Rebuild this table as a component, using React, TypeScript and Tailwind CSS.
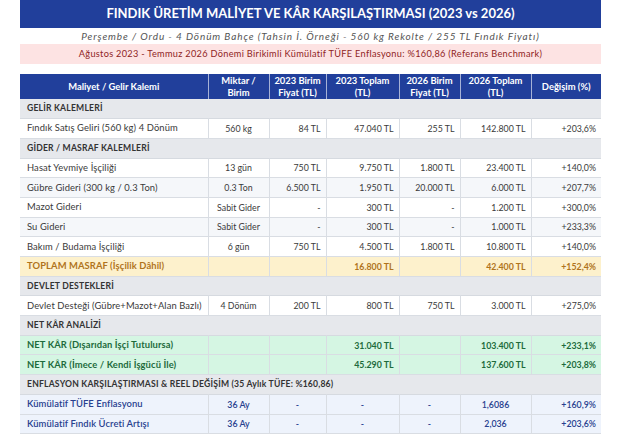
type Kind = 'section' | 'row' | 'total' | 'profit' | 'infl';

type Row = {
  kind: Kind;
  label: string;
  cells?: string[];
};

const ROWS: Row[] = [
  { kind: 'section', label: 'GELİR KALEMLERİ' },
  { kind: 'row', label: 'Fındık Satış Geliri (560 kg) 4 Dönüm', cells: ['560 kg', '84 TL', '47.040 TL', '255 TL', '142.800 TL', '+203,6%'] },
  { kind: 'section', label: 'GİDER / MASRAF KALEMLERİ' },
  { kind: 'row', label: 'Hasat Yevmiye İşçiliği', cells: ['13 gün', '750 TL', '9.750 TL', '1.800 TL', '23.400 TL', '+140,0%'] },
  { kind: 'row', label: 'Gübre Gideri (300 kg / 0.3 Ton)', cells: ['0.3 Ton', '6.500 TL', '1.950 TL', '20.000 TL', '6.000 TL', '+207,7%'] },
  { kind: 'row', label: 'Mazot Gideri', cells: ['Sabit Gider', '-', '300 TL', '-', '1.200 TL', '+300,0%'] },
  { kind: 'row', label: 'Su Gideri', cells: ['Sabit Gider', '-', '300 TL', '-', '1.000 TL', '+233,3%'] },
  { kind: 'row', label: 'Bakım / Budama İşçiliği', cells: ['6 gün', '750 TL', '4.500 TL', '1.800 TL', '10.800 TL', '+140,0%'] },
  { kind: 'total', label: 'TOPLAM MASRAF (İşçilik Dâhil)', cells: ['', '', '16.800 TL', '', '42.400 TL', '+152,4%'] },
  { kind: 'section', label: 'DEVLET DESTEKLERİ' },
  { kind: 'row', label: 'Devlet Desteği (Gübre+Mazot+Alan Bazlı)', cells: ['4 Dönüm', '200 TL', '800 TL', '750 TL', '3.000 TL', '+275,0%'] },
  { kind: 'section', label: 'NET KÂR ANALİZİ' },
  { kind: 'profit', label: 'NET KÂR (Dışarıdan İşçi Tutulursa)', cells: ['', '', '31.040 TL', '', '103.400 TL', '+233,1%'] },
  { kind: 'profit', label: 'NET KÂR (İmece / Kendi İşgücü İle)', cells: ['', '', '45.290 TL', '', '137.600 TL', '+203,8%'] },
  { kind: 'section', label: 'ENFLASYON KARŞILAŞTIRMASI & REEL DEĞİŞİM (35 Aylık TÜFE: %160,86)' },
  { kind: 'infl', label: 'Kümülatif TÜFE Enflasyonu', cells: ['36 Ay', '-', '-', '-', '1,6086', '+160,9%'] },
  { kind: 'infl', label: 'Kümülatif Fındık Ücreti Artışı', cells: ['36 Ay', '-', '-', '-', '2,036', '+203,6%'] },
];

const HEADERS = [
  'Maliyet / Gelir Kalemi',
  'Miktar / Birim',
  '2023 Birim Fiyat (TL)',
  '2023 Toplam (TL)',
  '2026 Birim Fiyat (TL)',
  '2026 Toplam (TL)',
  'Değişim (%)',
];

const WIDTHS = ['w-[188px]', 'w-[61px]', 'w-[57px]', 'w-[73px]', 'w-[61px]', 'w-[71px]', 'w-[70px]'];

// row background + text colour per kind
const rowTone: Record<Exclude<Kind, 'section'>, string> = {
  row: 'text-[#3a3a3a]',
  total: 'bg-[#fdf1cc] text-[#b0741c] font-bold',
  profit: 'bg-[#d5f6e3] text-[#1d6b3c] font-bold',
  infl: 'bg-[#eef3fc] text-[#27408f] font-semibold',
};

export default function App() {
  let stripe = 0;

  return (
    <div className="w-[621px] h-[445px] bg-white font-['Lato','Liberation_Sans',sans-serif] overflow-hidden">
      <div className="mx-[20px] w-[581px]">
        {/* Title */}
        <div className="h-[28px] bg-[#213f9b] flex items-center justify-center">
          <h1 className="text-white font-bold text-[13px]">
            FINDIK ÜRETİM MALİYET VE KÂR KARŞILAŞTIRMASI (2023 vs 2026)
          </h1>
        </div>
        <p className="h-[16px] flex items-center justify-center italic text-[10px] tracking-[0.9px] text-[#555]">
          Perşembe / Ordu - 4 Dönüm Bahçe (Tahsin İ. Örneği - 560 kg Rekolte / 255 TL Fındık Fiyatı)
        </p>
        <div className="h-[20px] bg-[#fde3e3] flex items-center justify-center text-[9.2px] tracking-[0.3px] text-[#8f2424]">
          Ağustos 2023 - Temmuz 2026 Dönemi Birikimli Kümülatif TÜFE Enflasyonu: %160,86 (Referans Benchmark)
        </div>

        <table className="mt-[10px] w-[581px] table-fixed border-collapse text-[8.8px]">
          <colgroup>
            {WIDTHS.map((w, i) => (
              <col key={i} className={w} />
            ))}
          </colgroup>
          <thead>
            <tr className="h-[25px] bg-[#213f9b] text-white">
              {HEADERS.map((h, i) => (
                <th
                  key={h}
                  className={`font-bold text-[9.4px] leading-[11.5px] px-[3px] ${i > 0 ? 'border-l border-white/60' : ''}`}
                >
                  {h}
                </th>
              ))}
            </tr>
          </thead>
          <tbody>
            {ROWS.map((r, idx) => {
              if (r.kind === 'section') {
                stripe = 0;
                return (
                  <tr key={idx} className="h-[19.7px] bg-[#e6e8ec] border-b border-[#d6dae0]">
                    <td colSpan={7} className="pl-[7px] font-bold text-[8.6px] text-[#333] tracking-[0.2px] whitespace-nowrap">
                      {r.label}
                    </td>
                  </tr>
                );
              }
              const alt = r.kind === 'row' && stripe++ % 2 === 1;
              const tone = rowTone[r.kind];
              const centered = r.kind === 'infl';
              return (
                <tr
                  key={idx}
                  className={`h-[19.7px] border-b border-[#d9dde3] ${alt ? 'bg-[#f5f7fa]' : r.kind === 'row' ? 'bg-white' : ''} ${tone}`}
                >
                  <td className="pl-[7px] text-[9.4px] tracking-[0.1px] whitespace-nowrap">{r.label}</td>
                  {r.cells!.map((c, ci) => {
                    let align = 'text-right pr-[5px]';
                    if (ci === 0) align = 'text-center';
                    else if (centered && ci < 5) align = 'text-center';
                    return (
                      <td key={ci} className={`border-l border-[#d9dde3] whitespace-nowrap ${align}`}>
                        {c}
                      </td>
                    );
                  })}
                </tr>
              );
            })}
          </tbody>
        </table>
      </div>
    </div>
  );
}
